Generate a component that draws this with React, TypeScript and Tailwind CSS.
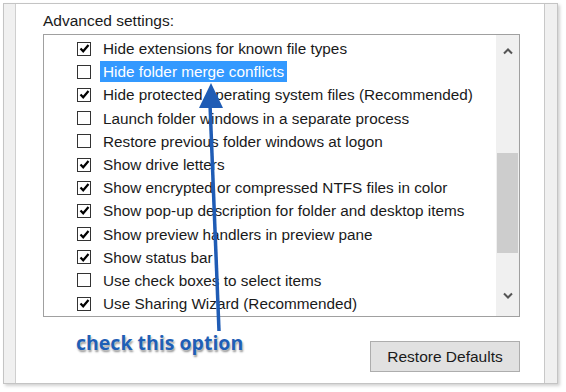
const rows = [
    { label: "Hide extensions for known file types", checked: true },
    { label: "Hide folder merge conflicts", checked: false, selected: true },
    { label: "Hide protected operating system files (Recommended)", checked: true },
    { label: "Launch folder windows in a separate process", checked: false },
    { label: "Restore previous folder windows at logon", checked: false },
    { label: "Show drive letters", checked: true },
    { label: "Show encrypted or compressed NTFS files in color", checked: true },
    { label: "Show pop-up description for folder and desktop items", checked: true },
    { label: "Show preview handlers in preview pane", checked: true },
    { label: "Show status bar", checked: true },
    { label: "Use check boxes to select items", checked: false },
    { label: "Use Sharing Wizard (Recommended)", checked: true },
]

function CheckBox({ checked }: { checked: boolean }) {
    return (
        <span className="flex h-[14px] w-[14px] shrink-0 items-center justify-center border border-[#333] bg-white">
            {checked && (
                <svg width="11" height="11" viewBox="0 0 11 11">
                    <path d="M1.5 5.5 L4.2 8.3 L9.5 2" fill="none" stroke="#000" strokeWidth="2.2" />
                </svg>
            )}
        </span>
    )
}

function Chevron({ up }: { up?: boolean }) {
    return (
        <svg width="12" height="8" viewBox="0 0 12 8">
            <path
                d={up ? "M2 6.5 L6 2.5 L10 6.5" : "M2 1.5 L6 5.5 L10 1.5"}
                fill="none"
                stroke="#555"
                strokeWidth="2"
            />
        </svg>
    )
}

export default function App() {
    return (
        <div
            className="relative h-[392px] w-[566px] overflow-hidden bg-white text-[#1a1a1a]"
            style={{ fontFamily: '"Liberation Sans", Arial, sans-serif' }}
        >
            <div className="ml-[3px] mt-[3px] flex h-[381px] w-[555px] border border-[#c4c4c4] shadow-[2px_2px_3px_rgba(0,0,0,0.18)]">
                <div className="w-[12px] border-r border-[#cfcfcf] bg-[#f0f0f0]" />

                <div className="flex flex-1 flex-col bg-white pl-[27px] pt-[6px]">
                    <p className="text-[15.5px] leading-[22px]">Advanced settings:</p>

                    <div className="mt-[2px] flex h-[283px] w-[477px] border border-[#a0a0a0]">
                        <ul className="flex-1 pt-[2px]">
                            {rows.map((row) => (
                                <li key={row.label} className="flex h-[23.2px] items-center pl-[33px]">
                                    <CheckBox checked={row.checked} />
                                    <span
                                        className={
                                            row.selected
                                                ? "ml-[9px] bg-[#3399ff] px-[3px] text-[15.3px] leading-[21px] text-white"
                                                : "ml-[12px] text-[15.3px] leading-[21px]"
                                        }
                                    >
                                        {row.label}
                                    </span>
                                </li>
                            ))}
                        </ul>

                        <div className="flex w-[23px] flex-col items-center bg-[#f0f0f0]">
                            <div className="flex h-[20px] items-end">
                                <Chevron up />
                            </div>
                            <div className="mt-[98px] h-[100px] w-[21px] bg-[#cdcdcd]" />
                            <div className="mt-auto flex h-[24px] items-start">
                                <Chevron />
                            </div>
                        </div>
                    </div>

                    <div className="mt-[24px] flex w-[477px] items-start justify-between">
                        <span
                            className="-mt-[13px] ml-[33px] text-[19.5px] font-bold text-[#1f5fb5] [text-shadow:0_0_2px_#fff,1px_2px_2px_rgba(0,0,0,0.45)]"
                            style={{ fontFamily: '"Open Sans", sans-serif' }}
                        >
                            check this option
                        </span>
                        <button className="h-[31px] w-[150px] border border-[#adadad] bg-[#e1e1e1] text-[15.5px]">
                            Restore Defaults
                        </button>
                    </div>
                </div>

                <div className="w-[13px] border-l border-[#c8c8c8] bg-[#f0f0f0]" />
            </div>

            <svg className="absolute left-0 top-0" width="566" height="392" viewBox="0 0 566 392">
                <line x1="219" y1="331" x2="210" y2="104" stroke="#1f5cb5" strokeWidth="3.5" />
                <polygon points="211,83 199,108 223,108" fill="#1f5cb5" />
            </svg>
        </div>
    )
}
